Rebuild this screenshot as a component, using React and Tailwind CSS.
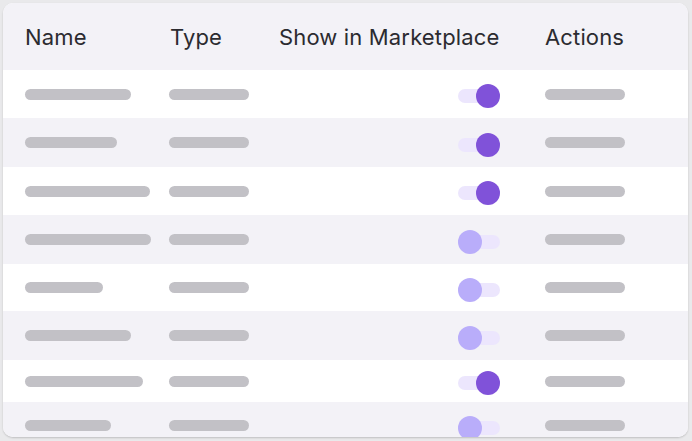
const rows = [
  { h: 48, name: 106, on: true },
  { h: 49, name: 92, on: true },
  { h: 48, name: 125, on: true },
  { h: 49, name: 126, on: false },
  { h: 47, name: 78, on: false },
  { h: 49, name: 106, on: false },
  { h: 42, name: 118, on: true },
  { h: 47, name: 86, on: false },
];

function Toggle({ on }) {
  return (
    <div className="relative h-[24px] w-[42px] translate-y-[2px]">
      <div className="absolute left-0 right-0 top-[5px] h-[14px] rounded-full bg-[#ece6fd]" />
      {on ? (
        <div className="absolute right-0 top-0 h-[24px] w-[24px] rounded-full bg-[#8052d9]" />
      ) : (
        <div className="absolute left-0 top-0 h-[24px] w-[24px] rounded-full bg-[#b9adfa]" />
      )}
    </div>
  );
}

function Bar({ w }) {
  return <div className="h-[11px] rounded-full bg-[#c2c1c6]" style={{ width: w }} />;
}

export default function App() {
  return (
    <div className="h-[441px] w-[692px] bg-[#e9e9eb] p-[3px] pr-[4px] font-['Inter',sans-serif]">
      <div className="h-[434px] overflow-hidden rounded-[10px] bg-white shadow-[0_1px_2px_rgba(0,0,0,0.18)]">
        <div className="grid h-[67px] grid-cols-[145px_109px_266px_1fr] items-center bg-[#f3f2f7] pl-[22px] text-[22px] leading-none tracking-[0.15px] text-[#2b2b30]">
          <div>Name</div>
          <div>Type</div>
          <div>Show in Marketplace</div>
          <div>Actions</div>
        </div>
        {rows.map((r, i) => (
          <div
            key={i}
            className={`grid grid-cols-[144px_108px_268px_1fr] items-center pl-[22px] ${i % 2 ? "bg-[#f3f2f7]" : "bg-white"}`}
            style={{ height: r.h }}
          >
            <Bar w={r.name} />
            <Bar w={80} />
            <div className="flex justify-end pr-[45px]">
              <Toggle on={r.on} />
            </div>
            <Bar w={80} />
          </div>
        ))}
      </div>
    </div>
  );
}
